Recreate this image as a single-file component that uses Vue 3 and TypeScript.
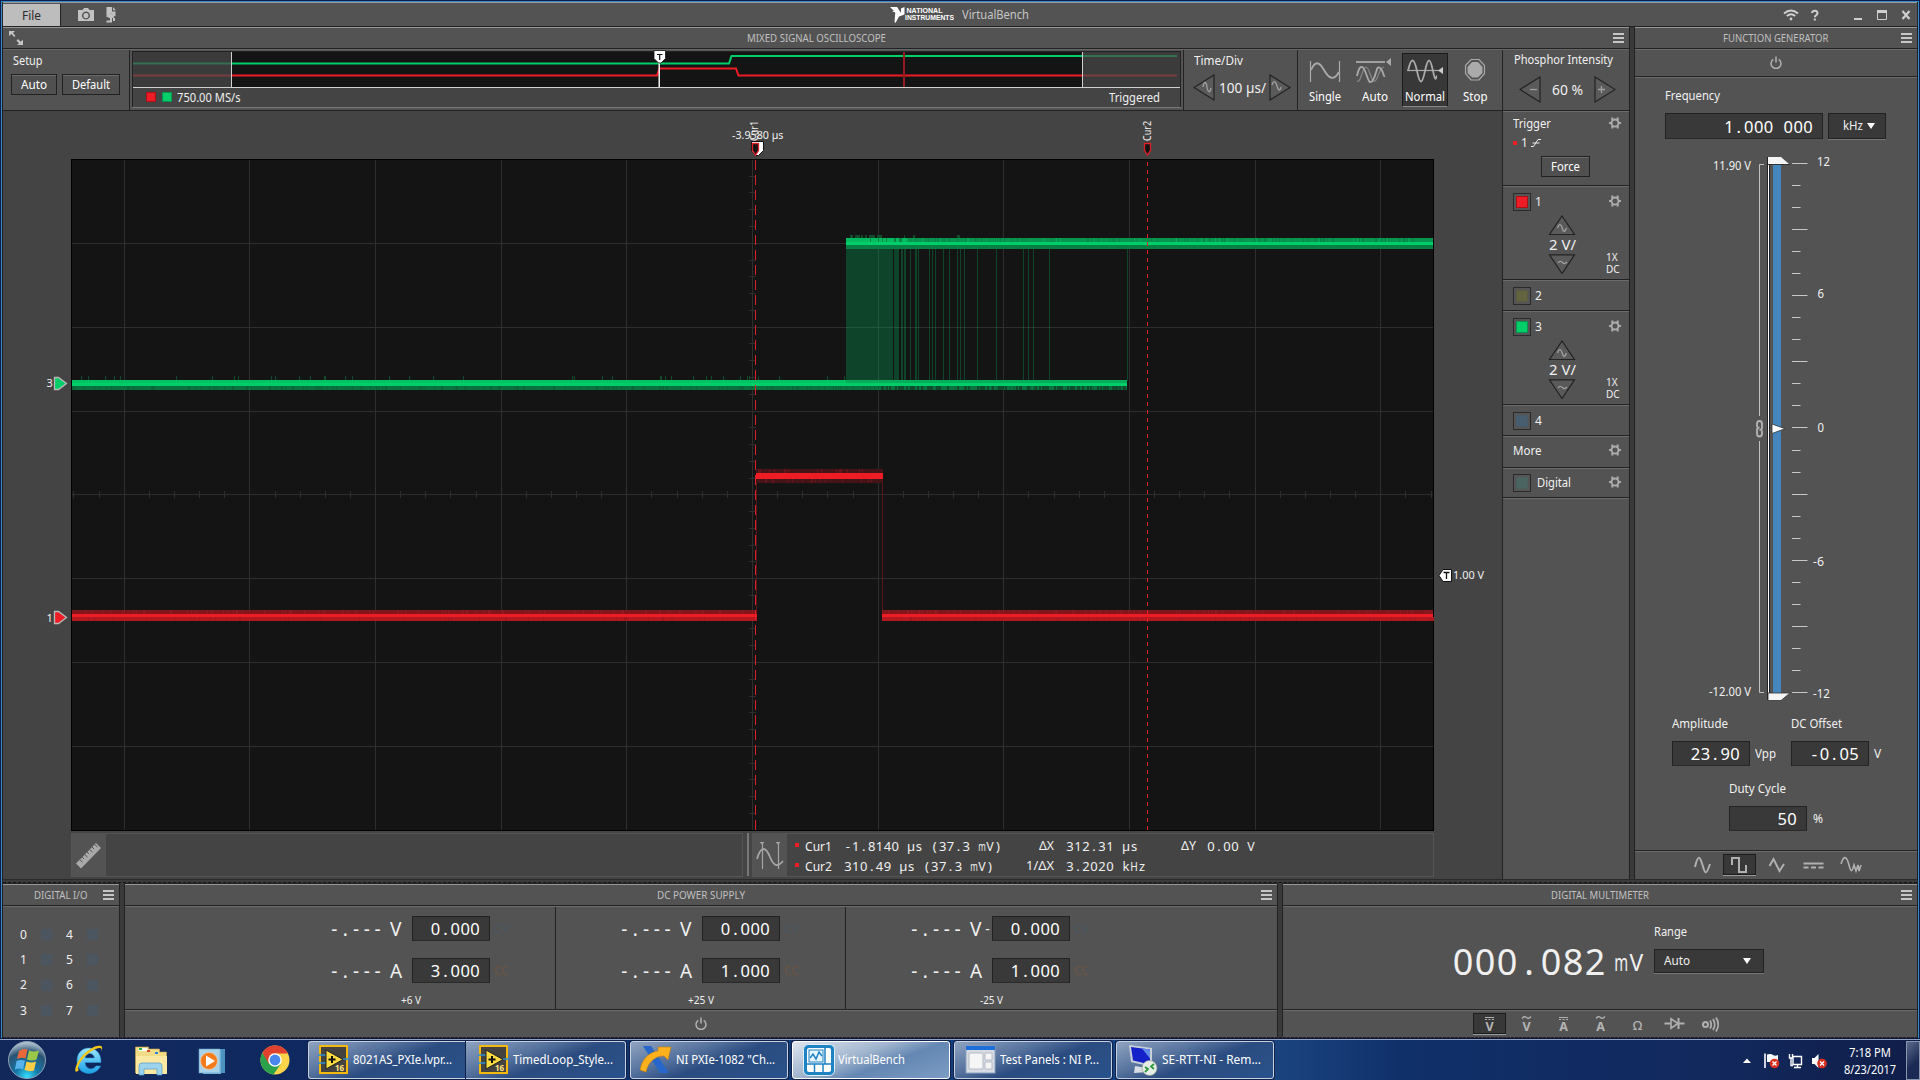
<script setup lang="ts">
import { h, type FunctionalComponent } from 'vue'

/* Squeezes or stretches a text run to a given width in pixels. */
const vFit = {
  mounted(el: HTMLElement, binding: { value: number }) {
    const natural = el.getBoundingClientRect().width
    if (!natural) return
    el.style.width = `${binding.value}px`
    el.style.transform = `scaleX(${binding.value / natural})`
  },
}

/* Fixed-pitch readout: every character sits in a cell of the same width. */
const narrow: Record<string, number> = { m: 0.62, H: 0.78, C: 0.95, V: 0.95 }
const Mono: FunctionalComponent<{ text: string; pitch: number }> = (p) =>
  h('span', { class: 'mono' }, [...p.text].map((c) =>
    h('span', {
      style: { width: `${p.pitch}px`, transform: narrow[c] ? `scaleX(${narrow[c]})` : undefined },
    }, c)))
Mono.props = ['text', 'pitch']

const gridX = [124, 249, 375, 501, 626, 752, 878, 1003, 1129, 1255, 1380]
const gridY = [243, 327, 411, 494, 578, 662, 746]
const minorX: number[] = []
for (let i = -27; i <= 27; i++) if (i % 5) minorX.push(Math.floor(752.5 + i * 25.13))
const minorY: number[] = []
for (let i = -19; i <= 19; i++) if (i % 5) minorY.push(Math.floor(494.8 + i * 16.77))

const jitter: [number, number][] = [
  [846, 47], [894, 5], [901, 2], [904, 2], [910, 1], [915, 2], [918, 1], [929, 1], [932, 1], [935, 1],
  [943, 1], [949, 1], [957, 1], [960, 1], [964, 1], [977, 1], [996, 1], [1023, 1], [1028, 1], [1033, 1],
  [1049, 1], [1127, 1],
]

let seed = 7
const rnd = () => (seed = (seed * 16807) % 2147483647) / 2147483647
const noise = (from: number, to: number, n: number) =>
  Array.from({ length: n }, () => Math.floor(from + rnd() * (to - from)))
const gLow = noise(72, 1126, 200)
const gLowTail = noise(880, 1126, 90)
const gHigh = noise(870, 1433, 130)
const gSpikes = noise(80, 850, 42)
const gTop = noise(850, 884, 18).concat([904, 913, 957])
const rLow = noise(72, 1433, 200).filter((x) => x < 756 || x > 883)
const rHigh = noise(758, 882, 34)

type Channel = { id: string; color: string; edge: string; on: boolean }
const channels: Channel[] = [
  { id: '1', color: '#ee1c24', edge: '#a61218', on: true },
  { id: '2', color: '#63633f', edge: '#595a44', on: false },
  { id: '3', color: '#00cf69', edge: '#079350', on: true },
  { id: '4', color: '#475d70', edge: '#4a5967', on: false },
]

const ticks = Array.from({ length: 25 }, (_, k) => ({ y: Math.round(163 + k * 22.04) + 0.5, long: k % 3 === 0 }))
const scaleLabels = [
  { t: '12', x: 1817, y: 165.5, w: 13 }, { t: '6', x: 1817.5, y: 297.5, w: 6.5 }, { t: '0', x: 1817.5, y: 431.5, w: 6.5 },
  { t: '-6', x: 1813, y: 565.5, w: 11 }, { t: '-12', x: 1813, y: 697.5, w: 17 },
]

const supplies = [
  { v: '0.000', a: '3.000', name: '+6 V', sign: '', w: 20 },
  { v: '0.000', a: '1.000', name: '+25 V', sign: '', w: 26 },
  { v: '0.000', a: '1.000', name: '-25 V', sign: '-', w: 23 },
]
const dio = [['0', '4'], ['1', '5'], ['2', '6'], ['3', '7']]
const tasks = [
  { icon: 'lv', t: '8021AS_PXIe.lvpr...', w: 99, cls: 'grp-a' },
  { icon: 'lv', t: 'TimedLoop_Style...', w: 100, cls: 'grp-b' },
  { icon: 'max', t: 'NI PXIe-1082 "Ch...', w: 99, cls: '' },
  { icon: 'vb', t: 'VirtualBench', w: 67, cls: 'active' },
  { icon: 'tp', t: 'Test Panels : NI P...', w: 99, cls: '' },
  { icon: 'rdp', t: 'SE-RTT-NI - Rem...', w: 99, cls: '' },
]
</script>

<template>
  <div class="screen">
    <div class="win">
      <header class="title">
        <div class="file"><span v-fit="19">File</span></div>
        <svg class="ticons" width="40" height="20" viewBox="76 4 40 20">
          <path fill="#c2c2c2" fill-rule="evenodd" d="M78 9h4.500l1.500-2h4l1.500 2h4.500v11h-16zM86 10.500a4 4 0 1 0 .01 0zM86 12a2.600 2.600 0 1 1-.01 0z" />
          <path fill="#c2c2c2" d="M106.500 6h5.500v4.500h3.500v4.500h-2l-2.500-3-3 4h-1.500z" />
          <path fill="#c2c2c2" d="M113 6l2.800 3.200H113z" />
          <path fill="none" stroke="#c2c2c2" stroke-width="2" d="M106.500 20.500h4.500v-6M108.300 16.500l2.700-3 2.700 3M114 17v3" />
        </svg>
        <div class="brand">
          <svg class="logo" width="66" height="20" viewBox="889 5 66 20">
            <path fill="#fff" d="M890 7h7l4 6V8.500l3.500-1.500v7.500l-5.500 2-3.500 6.500-1-1 .8-9.500-3-1 1.500-.7z" />
            <text x="906.500" y="13" textLength="36" lengthAdjust="spacingAndGlyphs" class="ni">NATIONAL</text>
            <text x="905" y="20" textLength="49" lengthAdjust="spacingAndGlyphs" class="ni">INSTRUMENTS</text>
          </svg>
          <span v-fit="67">VirtualBench</span>
        </div>
        <svg class="winbtns" width="134" height="20" viewBox="1783 4 134 20" fill="none" stroke="#cfcfcf">
          <path d="M1784 12.500q7-6 14 0M1786.800 15q4.200-3.600 8.400 0" stroke-width="2" />
          <circle cx="1791" cy="18" r="1.400" fill="#cfcfcf" stroke="none" />
          <path d="M1812 12c0-3 5.500-3 5.500.2 0 2-2.700 2-2.700 4M1814.800 17.500v2" stroke-width="2" />
          <path d="M1854 18h8" stroke-width="2" />
          <path d="M1877.500 9.500h9v9h-9z" /><path d="M1877 10.500h10" stroke-width="3" />
          <path d="M1902.500 10l7 8M1909.500 10l-7 8" stroke-width="2.200" />
        </svg>
      </header>

      <div class="upper">
        <section class="panel mso">
          <div class="phead">
            <svg width="16" height="16" viewBox="7 30 16 16" fill="#c4c4c4"><path d="M8 31h6l-2 2 2.500 3-1.500 1-2.500-3-2.500 2zM22 45h-6l2-1.800-2.500-2.500 1.500-1.700 2.500 2.500L22 40z" /></svg>
            <span v-fit="139">MIXED SIGNAL OSCILLOSCOPE</span>
            <i class="burger" />
          </div>
          <div class="toolbar">
            <div class="tb setup">
              <span v-fit="29.500" class="lbl">Setup</span>
              <div class="btns">
                <button style="width: 46px"><span v-fit="26">Auto</span></button>
                <button style="width: 58px"><span v-fit="38">Default</span></button>
              </div>
            </div>
            <div class="tb over">
              <svg width="1049" height="57" viewBox="132 51 1049 57">
                <rect x="132" y="51" width="1049" height="57" fill="#232323" />
                <rect x="133" y="52" width="1047" height="35" fill="#141414" />
                <rect x="133" y="88" width="1047" height="19" fill="#444" />
                <rect x="132" y="107" width="1049" height="1" fill="#777" />
                <path d="M133 63.500H729L731.500 56H1177" fill="none" stroke="#00cf69" stroke-width="2" />
                <path d="M133 75.500H657L659.500 68.500H736L738.500 75.500H1177" fill="none" stroke="#ee1c24" stroke-width="2" />
                <rect x="903" y="52" width="2" height="35" fill="#951b1f" />
                <rect x="133" y="52" width="98" height="35" fill="#4b4b4b" opacity=".72" />
                <rect x="1083" y="52" width="97" height="35" fill="#4b4b4b" opacity=".72" />
                <path d="M231.500 52V87M1082.500 52V87M133 87.500H1180M659.500 63V87" stroke="#d0d0d0" />
                <path d="M659 63V87" stroke="#fff" />
                <path d="M654 50.500h11.500v8l-4.500 4.500h-2.500l-4.500-4.500z" fill="#fff" stroke="#111" stroke-width=".8" />
                <path d="M657 54.500h5.500M659.700 54v6" stroke="#111" stroke-width="1.200" />
                <rect x="146.500" y="92.500" width="9" height="9" fill="#ee1c24" stroke="#a61218" />
                <rect x="162.500" y="92.500" width="9" height="9" fill="#00cf69" stroke="#079350" />
                <text x="177" y="102" class="s12" textLength="63.500" lengthAdjust="spacingAndGlyphs">750.00 MS/s</text>
                <text x="1109" y="102" class="s12" textLength="51" lengthAdjust="spacingAndGlyphs">Triggered</text>
              </svg>
            </div>
            <div class="tb tdiv">
              <span v-fit="49" class="lbl">Time/Div</span>
              <div class="step">
                <svg width="22" height="27" viewBox="0 0 22 27" class="tri"><path d="M21 1v25L1 13.500z" /><path class="g" d="M10 13c1-6 3-6 4 0s3 6 4 1" /></svg>
                <span v-fit="47" class="v14">100 µs/</span>
                <svg width="22" height="27" viewBox="0 0 22 27" class="tri"><path d="M1 1v25l20-12.500z" /><path class="g" d="M3 11c2-6 4-3 5 1s3 6 4 1" /></svg>
              </div>
            </div>
            <div class="tb modes">
              <div class="mode">
                <svg width="46" height="30" viewBox="0 0 46 30"><path class="ic" d="M8.500 7v21M37.500 7v21" /><path class="ic w2" d="M9 16C13 7 17 7 22 16s10 11 15 2" /></svg>
                <span v-fit="32">Single</span>
              </div>
              <div class="mode">
                <svg width="46" height="30" viewBox="0 0 46 30"><path class="ic w2" d="M4 8h29" /><path fill="#aaa" d="M39 4v8l-5-4z" /><path class="ic" opacity=".6" d="M5 27c4 3 5-14 9-14s5 17 9 14 4-14 9-14" /><path class="ic w2" d="M5 22c2-10 5-12 8-5s4 15 8 9 3-15 7-12 3 9 5 8" /></svg>
                <span v-fit="26">Auto</span>
              </div>
              <div class="mode on">
                <svg width="46" height="30" viewBox="0 0 46 30"><path class="ic" d="M5 16.500h32" /><path fill="#ccc" d="M41 13v7l-5-3.500z" /><path class="ic w2" d="M6 17c3-14 6-14 9 0s5 14 8 0 5-14 8 0 3 5 4 5" /></svg>
                <span v-fit="40">Normal</span>
              </div>
              <div class="mode">
                <svg width="46" height="30" viewBox="0 0 46 30"><path class="ic" d="M19 5.500h8l5.500 6v8l-5.500 6.500h-8l-5.500-6.500v-8z" /><path fill="#aaa" d="M20 8h6l4.500 5v6L26 23.500h-6L15.500 19v-6z" /></svg>
                <span v-fit="24.500">Stop</span>
              </div>
            </div>
            <div class="tb phos">
              <span v-fit="99" class="lbl">Phosphor Intensity</span>
              <div class="step">
                <svg width="22" height="27" viewBox="0 0 22 27" class="tri"><path d="M21 1v25L1 13.500z" /><path class="g" d="M11 13.500h7" /></svg>
                <span v-fit="31" class="v14">60 %</span>
                <svg width="22" height="27" viewBox="0 0 22 27" class="tri"><path d="M1 1v25l20-12.500z" /><path class="g" d="M4 13.500h7M7.500 10v7" /></svg>
              </div>
            </div>
          </div>

          <div class="body">
            <div class="scope">
              <svg class="chart" width="1499" height="722" viewBox="3 111 1499 722" shape-rendering="crispEdges">
                <rect x="71" y="159" width="1363" height="672" fill="#000" />
                <rect x="72" y="160" width="1361" height="670" fill="#141414" />
                <g fill="#2e2e2e">
                  <rect v-for="x in gridX" :key="'x' + x" :x="x" y="160" width="1" height="670" />
                  <rect v-for="y in gridY" :key="'y' + y" x="72" :y="y" width="1361" height="1" />
                  <rect v-for="x in minorX" :key="'a' + x" :x="x" y="491" width="1" height="7" />
                  <rect v-for="y in minorY" :key="'b' + y" x="749" :y="y" width="7" height="1" />
                </g>
                <g fill="#00cf69" opacity=".26">
                  <rect v-for="j in jitter" :key="j[0]" :x="j[0]" y="248" :width="j[1]" height="133" />
                </g>
                <g fill="#124a2b">
                  <rect v-for="(x, i) in gSpikes" :key="i" :x="x" y="376" width="1" height="4" />
                  <rect v-for="(x, i) in gTop" :key="'t' + i" :x="x" y="235" :width="1 + (i % 3)" height="4" />
                </g>
                <rect x="72" y="380" width="775" height="6" fill="#00c463" />
                <rect x="846" y="380" width="281" height="4" fill="#04ad5a" />
                <rect x="72" y="383" width="1055" height="3" fill="#00cf69" />
                <rect x="72" y="386" width="1055" height="4" fill="#0b713f" />
                <rect v-for="(x, i) in gLow" :key="'l' + i" :x="x" y="386" width="1" height="4" fill="#0c653a" />
                <rect v-for="(x, i) in gLowTail" :key="'m' + i" :x="x" y="386" width="2" height="4" fill="#124a2e" />
                <rect x="846" y="238" width="587" height="4" fill="#07954f" />
                <rect x="846" y="238" width="60" height="4" fill="#00bb60" />
                <rect x="846" y="242" width="587" height="3" fill="#00cf69" />
                <rect x="846" y="245" width="587" height="4" fill="#088045" />
                <rect v-for="(x, i) in gHigh" :key="'h' + i" :x="x" y="238" width="1" height="4" :fill="i % 4 ? '#098548' : '#04ad5a'" />

                <rect x="756" y="483" width="1" height="131" fill="#571619" />
                <rect x="882" y="483" width="1" height="131" fill="#571619" />
                <g v-for="s in [[72, 685], [882, 551]]" :key="s[0]">
                  <rect :x="s[0]" y="610" :width="s[1]" height="4" fill="#82161a" />
                  <rect :x="s[0]" y="614" :width="s[1]" height="3" fill="#ee1c24" />
                  <rect :x="s[0]" y="617" :width="s[1]" height="4" fill="#b5191f" />
                </g>
                <g v-for="(x, i) in rLow" :key="'r' + i">
                  <rect :x="x" y="610" width="1" height="4" fill="#901a1e" />
                  <rect v-if="i % 2" :x="x + 3" y="617" width="1" height="4" fill="#a4181c" />
                </g>
                <rect x="756" y="469" width="127" height="14" fill="#451416" />
                <rect v-for="(x, i) in rHigh" :key="'q' + i" :x="x" :y="i % 2 ? 469 : 479" width="1" height="4" fill="#63171a" />
                <rect x="756" y="473" width="127" height="6" fill="#ee1c24" />

                <path d="M755.500 160V830" stroke="#dc2027" stroke-dasharray="10 5" />
                <path d="M1147.500 162V830" stroke="#ee1c24" stroke-dasharray="4 4" />

                <g shape-rendering="auto">
                  <path d="M751.500 141.500h12v9l-5 5h-2.500l-4.500-4.500z" fill="#fff" stroke="#111" />
                  <path d="M752.500 143.500h6v7l-3 4.500-3-4.500z" fill="#141414" stroke="#dc2027" stroke-width="1.300" />
                  <path d="M1144.500 143.500h6v7l-3 4.500-3-4.500z" fill="#141414" stroke="#dc2027" stroke-width="1.300" />
                  <text x="732" y="139" class="s11" textLength="51.500" lengthAdjust="spacingAndGlyphs">-3.9580 µs</text>
                  <text transform="translate(757.500 141) rotate(-90)" class="s11" textLength="20" lengthAdjust="spacingAndGlyphs">Cur1</text>
                  <text transform="translate(1150.500 141) rotate(-90)" class="s11" textLength="20" lengthAdjust="spacingAndGlyphs">Cur2</text>
                  <text x="46.500" y="387" class="s11">3</text>
                  <text x="46.500" y="622" class="s11">1</text>
                  <path d="M54.500 377.500h4l8 6-8 6h-4z" fill="#00cf69" stroke="#b9b9b9" stroke-width="1.300" />
                  <path d="M54.500 611.500h4l8 6-8 6h-4z" fill="#ee1c24" stroke="#b9b9b9" stroke-width="1.300" />
                  <path d="M1451.500 569.500v12h-8.500l-4-6 4-6z" fill="#fff" stroke="#111" />
                  <path d="M1443.500 572.500h6M1446.500 572v7" stroke="#111" stroke-width="1.300" />
                  <text x="1453" y="579" class="s11" textLength="31" lengthAdjust="spacingAndGlyphs">1.00 V</text>
                </g>
              </svg>
              <div class="measure">
                <div class="mtile left">
                  <svg width="34" height="43" viewBox="0 0 34 43"><path fill="#a9a9a9" d="M24 9l5 5L9 34.500 4 29.500z" /><path stroke="#535353" d="M22.500 10.500l3 2.500M20 13l2 2M17.500 15.500l3 2.500M15 18l2 2M12.500 20.500l3 2.500M10 23l2 2M7.500 25.500l3 2.500" /></svg>
                </div>
                <i class="bar" />
                <div class="mtile right">
                  <svg width="34" height="43" viewBox="0 0 34 43" fill="none" stroke="#a5a5a5"><path d="M9.500 8v27M25.500 8v27" stroke-width="1.200" /><path d="M6.500 8h5l-2.500 2.500zM22.500 8h5l-2.500 2.500z" fill="#a5a5a5" stroke="none" /><path d="M4 25C8 11 13 13 17 23s8 10 13 4" stroke-width="1.800" /></svg>
                  <div class="readout">
                    <div class="rrow">
                      <i class="dot" /><span v-fit="27" class="cn">Cur1</span><Mono class="m1" text="-1.8140 µs (37.3 mV)" :pitch="7.9" />
                      <div class="dx"><span v-fit="15">ΔX</span></div><Mono class="m2" text="312.31 µs" :pitch="8" /><div class="dy"><span v-fit="15">ΔY</span></div><Mono text="0.00 V" :pitch="8" />
                    </div>
                    <div class="rrow">
                      <i class="dot" /><span v-fit="27" class="cn">Cur2</span><Mono class="m1" text="310.49 µs (37.3 mV)" :pitch="7.9" />
                      <div class="dx"><span v-fit="28">1/ΔX</span></div><Mono class="m2" text="3.2020 kHz" :pitch="8" />
                    </div>
                  </div>
                </div>
              </div>
            </div>

            <aside class="side">
              <div class="sec trig">
                <div class="row"><span v-fit="38">Trigger</span><svg class="gear" viewBox="0 0 12 12"><use href="#gear" /></svg></div>
                <div class="edge"><i class="dot" /><span>1</span><svg width="12" height="10" viewBox="0 0 12 10"><path d="M1 8.500h2.500L8 1.500h3M2.500 5h7" fill="none" stroke="#eee" /></svg></div>
                <button class="force"><span v-fit="29">Force</span></button>
              </div>
              <div v-for="c in channels" :key="c.id" class="sec" :class="c.on ? 'ch' : 'choff'">
                <div class="row">
                  <i class="sw"><b :style="{ background: c.color, borderColor: c.edge }" /></i><span class="cid">{{ c.id }}</span>
                  <svg v-if="c.on" class="gear" viewBox="0 0 12 12"><use href="#gear" /></svg>
                </div>
                <div v-if="c.on" class="vdiv">
                  <svg width="28" height="20" viewBox="0 0 28 20" class="tri"><path d="M14 1l12.500 18.500h-25z" /><path class="g" d="M9.500 13c2-6 4-3 5 1s3 2 4-1" /></svg>
                  <span v-fit="27" class="v14">2 V/</span>
                  <svg width="28" height="20" viewBox="0 0 28 20" class="tri"><path d="M14 19.500L1.500 .800h25z" /><path class="g" d="M10 9c2-3 4-1 5 0s2 1 4-1" /></svg>
                  <div class="coup">1X<br />DC</div>
                </div>
              </div>
              <div class="sec more"><div class="row"><span v-fit="28.500">More</span><svg class="gear" viewBox="0 0 12 12"><use href="#gear" /></svg></div></div>
              <div class="sec digi">
                <div class="row"><i class="sw"><b class="dsw" /></i><span v-fit="34" class="cid dg">Digital</span><svg class="gear" viewBox="0 0 12 12"><use href="#gear" /></svg></div>
              </div>
              <div class="sec rest" />
            </aside>
          </div>
        </section>

        <section class="panel fg">
          <div class="phead"><i /><span v-fit="105.500">FUNCTION GENERATOR</span><i class="burger" /></div>
          <div class="fgpow"><svg class="power" viewBox="0 0 12 13"><use href="#power" /></svg></div>
          <div class="fgbody">
            <div class="freq">
              <span v-fit="55">Frequency</span>
              <div class="frow">
                <div class="num fnum"><Mono text="1.000 000" :pitch="9.9" /></div>
                <div class="sel khz"><span v-fit="20">kHz</span><i class="dn" /></div>
              </div>
            </div>
            <svg width="282" height="560" viewBox="1635 150 282 560">
              <path d="M1764 164.500H1759.500V416M1759.500 441V692.500H1764" fill="none" stroke="#c0c0c0" />
              <path d="M1757 427v-3q0-3 2.500-3t2.500 3v3.500q0 2.500-2.500 2.500M1762 430.500v3q0 3-2.500 3t-2.500-3V430q0-2.500 2.500-2.500" fill="none" stroke="#b4b4b4" stroke-width="1.800" />
              <rect x="1767" y="157" width="3" height="543" fill="#222" /><rect x="1768" y="157" width="1" height="543" fill="#fff" />
              <rect x="1773" y="164" width="8" height="529" fill="#4486bd" />
              <path d="M1768 157h13l8.500 7.500H1768z" fill="#f4f4f4" /><path d="M1768 164.500h22" stroke="#333" />
              <path d="M1768 693h22l-9 7.500H1768z" fill="#f4f4f4" stroke="#333" stroke-width=".8" />
              <path d="M1772 424v9.500l13-4.800z" fill="#fff" stroke="#333" stroke-width=".8" />
              <path v-for="t in ticks" :key="t.y" :d="`M1792 ${t.y}H${t.long ? 1807.500 : 1800.500}`" stroke="#c8c8c8" />
              <text v-for="l in scaleLabels" :key="l.t" :x="l.x" :y="l.y" class="s12" :textLength="l.w" lengthAdjust="spacingAndGlyphs">{{ l.t }}</text>
              <text x="1713" y="170" class="s12" textLength="38" lengthAdjust="spacingAndGlyphs">11.90 V</text>
              <text x="1709" y="696" class="s12" textLength="42" lengthAdjust="spacingAndGlyphs">-12.00 V</text>
            </svg>
            <div class="amps">
              <div class="fld"><span v-fit="56">Amplitude</span><div class="frow"><div class="num"><Mono text="23.90" :pitch="9.9" /></div><span class="unit" v-fit="21">Vpp</span></div></div>
              <div class="fld"><span v-fit="51">DC Offset</span><div class="frow"><div class="num"><Mono text="-0.05" :pitch="9.9" /></div><span class="unit">V</span></div></div>
            </div>
            <div class="duty fld"><span v-fit="57">Duty Cycle</span><div class="frow"><div class="num"><Mono text="50" :pitch="9.9" /></div><span class="unit" v-fit="10">%</span></div></div>
          </div>
          <div class="tabs">
            <div class="tab"><svg viewBox="0 0 33 20"><path d="M9 12C12-1 14 1 16.500 10S20 21 24 9" /></svg></div>
            <div class="tab on"><svg viewBox="0 0 33 20"><path d="M9 10V3h7v14h7V10" /></svg></div>
            <div class="tab"><svg viewBox="0 0 33 20"><path d="M9.500 11l4-7 6 12L24 9" /></svg></div>
            <div class="tab"><svg viewBox="0 0 33 20"><path d="M6.500 8.500h20M6.500 12.500h5M14 12.500h5M21.500 12.500h5" /></svg></div>
            <div class="tab"><svg viewBox="0 0 33 20"><path d="M7 9C10-1 13 2 15 10s3 7 5 0l2 6 2-6 1 6 2-6" stroke-width="1.600" /></svg></div>
          </div>
        </section>
      </div>

      <div class="split" />

      <div class="lower">
        <section class="panel dio">
          <div class="phead"><i /><span v-fit="53.500">DIGITAL I/O</span><i class="burger" /></div>
          <div class="dbody">
            <div v-for="r in dio" :key="r[0]" class="drow"><span>{{ r[0] }}</span><i /><span>{{ r[1] }}</span><i /></div>
          </div>
        </section>
        <section class="panel dc">
          <div class="phead"><i /><span v-fit="88">DC POWER SUPPLY</span><i class="burger" /></div>
          <div class="dcb">
            <div v-for="s in supplies" :key="s.name" class="sup">
              <div class="blk">
                <div class="srow"><Mono class="dashes" text="-.---" :pitch="10.8" /><span class="un">V</span><span class="sg">{{ s.sign }}</span><div class="num"><Mono :text="s.v" :pitch="9.9" /></div><span class="cv">CV</span></div>
                <div class="srow"><Mono class="dashes" text="-.---" :pitch="10.8" /><span class="un">A</span><span class="sg" /><div class="num"><Mono :text="s.a" :pitch="9.9" /></div><span class="cv cc">CC</span></div>
                <div class="cap"><span v-fit="s.w">{{ s.name }}</span></div>
              </div>
            </div>
          </div>
          <div class="foot"><svg class="power" viewBox="0 0 12 13"><use href="#power" /></svg></div>
        </section>
        <section class="panel dmm">
          <div class="phead"><i /><span v-fit="98">DIGITAL MULTIMETER</span><i class="burger" /></div>
          <div class="dmb">
            <Mono class="big" text="000.082" :pitch="22" /><Mono class="mv" text="mV" :pitch="14.5" />
            <div class="rng"><span v-fit="33">Range</span><div class="sel"><span v-fit="26">Auto</span><i class="dn" /></div></div>
          </div>
          <div class="tabs">
            <div class="tab on"><svg viewBox="0 0 33 20"><path d="M12 3.500h9" stroke-width="1" /><path d="M12 5.500h2M15.500 5.500h2M19 5.500h2" stroke-width="1" /><text x="16.500" y="17">V</text></svg></div>
            <div class="tab"><svg viewBox="0 0 33 20"><path d="M12 4.500q2.500-3 4.500-1t4.500-1" stroke-width="1.300" /><text x="16.500" y="17">V</text></svg></div>
            <div class="tab"><svg viewBox="0 0 33 20"><path d="M12 3.500h9" stroke-width="1" /><path d="M12 5.500h2M15.500 5.500h2M19 5.500h2" stroke-width="1" /><text x="16.500" y="17">A</text></svg></div>
            <div class="tab"><svg viewBox="0 0 33 20"><path d="M12 4.500q2.500-3 4.500-1t4.500-1" stroke-width="1.300" /><text x="16.500" y="17">A</text></svg></div>
            <div class="tab"><svg viewBox="0 0 33 20"><text x="16.500" y="16" class="ohm">Ω</text></svg></div>
            <div class="tab"><svg viewBox="0 0 33 20"><path d="M6.500 9.500h6M20 9.500h6.500M20.500 4v11" /><path d="M13 4.800v9.400l7-4.700z" stroke-width="1.600" /></svg></div>
            <div class="tab"><svg viewBox="0 0 33 20"><circle cx="10.500" cy="10.500" r="2.500" /><path d="M15 6.500q2.500 4 0 8M18 5q3.500 5.500 0 11M21 3.500q4.500 7 0 14" stroke-width="1.800" /></svg></div>
          </div>
        </section>
      </div>
      <div class="dash" />
    </div>

    <footer class="taskbar">
      <svg width="308" height="40" viewBox="0 1040 308 40">
        <defs>
          <radialGradient id="orb" cx=".5" cy=".95" r=".9"><stop offset="0" stop-color="#35e0ff" /><stop offset=".35" stop-color="#1577a8" /><stop offset=".75" stop-color="#2a5373" /><stop offset="1" stop-color="#a9bccb" /></radialGradient>
          <linearGradient id="ieg" x1="0" y1="0" x2="0" y2="1"><stop offset="0" stop-color="#9be6ff" /><stop offset="1" stop-color="#1aa0e6" /></linearGradient>
        </defs>
        <circle cx="27" cy="1060" r="18.500" fill="url(#orb)" stroke="#8fa3b6" />
        <path d="M19 1051q4-3 8.500-1.500l-2 9q-4-1.500-8.500.5z" fill="#e8683a" /><path d="M29 1050.500q5 2 10 0l-2.500 9q-4 2-9.500 0z" fill="#9cc84a" />
        <path d="M16.500 1061q4-2 8.500-.3l-2 8.500q-4-1.500-8 .3z" fill="#57b4ea" /><path d="M26.500 1061.500q5 2 9.500 0l-2 9q-5 1.500-9.500-.5z" fill="#fbce45" />
        <path d="M101 1062.500H85c.5 7.500 8 8 11 3.500h4.500C96 1077 77 1076 77 1061c0-17.500 24.500-17.500 24 1.500zM85 1058h9.500c-1-6-8.500-6-9.500 0z" fill="url(#ieg)" fill-rule="evenodd" stroke="#2a9fe0" stroke-width=".5" />
        <path d="M79 1070c-5 5-5-2 0-10 6-9 17-16 22-14 2 1 1 4 0 6 1-3 .5-4-1-4-5 0-14 6-18 12-4 5-5 9-3 10z" fill="#f5c518" />
        <path d="M135.500 1047h13v2h11v3h7v21h-31z" fill="#f3dc86" stroke="#c9a64c" stroke-width=".6" />
        <path d="M136 1056h31v18h-31z" fill="#fbe9a3" /><path d="M138.500 1048h9v3h-9z" fill="#fff" /><path d="M139 1048h3v2h-3z" fill="#1fae3e" /><path d="M147 1050h3v2h-3z" fill="#d8452c" /><path d="M155 1052h3v2h-3z" fill="#2f86d8" />
        <path d="M139 1075v-9q0-3 3-3h17q3 0 3 3v9h-5v-6h-13v6z" fill="#9ed3ee" stroke="#4d9cc6" stroke-width=".7" />
        <path d="M207 1049h18v24h-18z" fill="#4b93c0" /><path d="M203 1050h18v24h-18z" fill="#7db8db" /><path d="M199 1049h21v24h-21z" fill="#a9d3ea" stroke="#5b9dc4" stroke-width=".6" />
        <circle cx="209" cy="1061" r="8.500" fill="#f27c1c" stroke="#fbd2a2" stroke-width=".6" /><path d="M206 1055.500v11l9-5.500z" fill="#fff" />
        <circle cx="275" cy="1060" r="14.500" fill="#fdd34a" /><path d="M262.400 1052.800A14.500 14.500 0 0 1 288 1053.500H275z" fill="#e0402f" />
        <path d="M262.400 1052.800A14.500 14.500 0 0 0 273.500 1074.500L281 1063.500l-10 1z" fill="#2ba14b" /><path d="M262.400 1052.800L269 1064l6-10.500z" fill="#e0402f" />
        <circle cx="275" cy="1060" r="6.800" fill="#fff" /><circle cx="275" cy="1060" r="5.400" fill="#4a86ec" />
      </svg>
      <div v-for="t in tasks" :key="t.t" class="task" :class="t.cls">
        <svg v-if="t.icon === 'lv'" width="32" height="30" viewBox="0 0 32 30"><rect x="2" y="1" width="27" height="27" fill="#45433f" stroke="#f5b80c" stroke-width="2" /><path d="M0 10h8M0 18h8M25 14h6" stroke="#2f8fd0" stroke-width="1.500" /><path d="M8 5v19l17-9.500z" fill="#fddb3f" stroke="#222" /><path d="M10.500 14.500h7M14 11v7" stroke="#111" stroke-width="2" /><text x="17" y="26" class="t16">16</text></svg>
        <svg v-else-if="t.icon === 'max'" class="mx" width="32" height="32" viewBox="0 0 32 32"><path d="M3 2h8l18 27h-9z" fill="#2667c9" /><path d="M0 26C2 14 10 8 18 7V3h13l-3 13-4-4C15 12 8 18 6 28z" fill="#fbb01e" stroke="#c27d0c" stroke-width=".6" /></svg>
        <svg v-else-if="t.icon === 'vb'" width="32" height="32" viewBox="0 0 32 32"><rect x=".5" y=".5" width="31" height="31" rx="5" fill="#1f82c3" stroke="#dff0fb" /><rect x="4" y="4" width="24" height="24" rx="2" fill="#fff" /><rect x="6" y="6" width="14" height="12" fill="#e9f5fc" stroke="#1f82c3" /><path d="M7 14l3-4 3 5 3-7 3 4" fill="none" stroke="#1f82c3" stroke-width="1.500" /><path d="M4 20h24M11.500 20v8M20 20v8M22 4v16" stroke="#1f82c3" stroke-width="1.500" /></svg>
        <svg v-else-if="t.icon === 'tp'" width="32" height="30" viewBox="0 0 32 30"><rect x="1" y="1" width="29" height="27" fill="#d6dbe4" stroke="#8ea2bf" /><path d="M1 1h29v4H1z" fill="#1d6fd8" /><path d="M4 8h14v16H4zM20 8h7v7h-7zM20 17h7v7h-7z" fill="#f5f5f5" stroke="#b5bac4" /></svg>
        <svg v-else width="32" height="32" viewBox="0 0 32 32"><path d="M2 1l23 3v19L4 18z" fill="#c9d0da" /><path d="M4 3l19 2.500v15L6 16.500z" fill="#1522c9" /><path d="M15 4.500l8 1v9z" fill="#5e8be8" /><path d="M8 22l12 2 1 4-14 1z" fill="#d9dee4" /><circle cx="22.500" cy="24" r="7.500" fill="#e8ece8" stroke="#8b9a8b" stroke-width=".6" /><path d="M18 23l3 2-3 3M27 20l-3 2.500 3 2.500" fill="none" stroke="#2c9a3b" stroke-width="1.800" /></svg>
        <span v-fit="t.w">{{ t.t }}</span>
      </div>
      <svg class="tray" width="92" height="24" viewBox="1740 1048 92 24">
        <path d="M1743 1063h8l-4-4.500z" fill="#fff" />
        <path d="M1765 1053.500v14.500" stroke="#fff" stroke-width="1.600" /><path d="M1767 1054.500q4-1 6 .5t5 0v7h-11z" fill="#fff" />
        <circle cx="1774.500" cy="1063.500" r="4.800" fill="#d8301f" /><path d="M1772.500 1061.500l4 4M1776.500 1061.500l-4 4" stroke="#fff" stroke-width="1.300" />
        <path d="M1793 1056.500h8.500v8h-8.500zM1794 1067.500h7M1797.500 1064.500v3M1789.500 1054v4h3v-4M1791 1058v7.500h2" fill="none" stroke="#fff" stroke-width="1.400" />
        <path d="M1812 1058h2.500l4-4v14l-4-4h-2.500z" fill="#fff" /><circle cx="1822" cy="1063.500" r="4.800" fill="#d8301f" /><path d="M1820 1061.500l4 4M1824 1061.500l-4 4" stroke="#fff" stroke-width="1.300" />
      </svg>
      <div class="clock"><span v-fit="42">7:18 PM</span><span v-fit="52">8/23/2017</span></div>
      <i class="peek" />
    </footer>

    <svg width="0" height="0" class="defs">
      <defs>
        <g id="gear"><circle cx="6" cy="6" r="3.500" fill="none" stroke="#acacac" stroke-width="1.900" /><path d="M3.300 .500v2.500M8.700 .500v2.500M3.300 9v2.500M8.700 9v2.500M0 6h2.500M9.500 6h2.500" stroke="#acacac" stroke-width="2" /></g>
        <g id="power"><path d="M3.300 3.300A5 5 0 1 0 8.700 3.300" fill="none" stroke="#b0b0b0" stroke-width="1.500" /><path d="M6 .500v6" stroke="#b0b0b0" stroke-width="1.500" /></g>
      </defs>
    </svg>
  </div>
</template>

<style>
body { background: #0c2350; }
.mono { display: inline-flex; white-space: pre; }
.mono > span { display: flex; flex: none; justify-content: center; }
</style>

<style scoped>
.screen { width: 1920px; height: 1080px; display: flex; flex-direction: column; overflow: hidden; background: #0b1f4c; font: 12px/16px "Noto Sans", sans-serif; color: #f0f0f0; }
.screen span { white-space: nowrap; transform-origin: 0 50%; flex: none; }
.defs { position: absolute; }
svg { display: block; flex: none; }
i { font-style: normal; }
.s12 { font: 12px "Noto Sans", sans-serif; fill: #f0f0f0; }
.s11 { font: 11px "Noto Sans", sans-serif; fill: #f0f0f0; }
.v14 { font-size: 14px; }
.lbl { align-self: flex-start; }

.win { height: 1036px; margin: 1px 1px 0; border: 1px solid #3a86c4; padding: 0 1px; background: #2a2a2a; display: flex; flex-direction: column; }
.title { height: 25px; box-sizing: border-box; border-top: 1px solid #9a9a9a; border-bottom: 1px solid #222; background: #535353; display: flex; align-items: center; }
.file { width: 58px; height: 22px; background: #bdbdbd; color: #2c2c2c; border-right: 1px solid #222; padding-left: 19px; box-sizing: border-box; display: flex; align-items: center; font-size: 13px; }
.ticons { margin-left: 15px; }
.brand { display: flex; align-items: center; gap: 7px; margin-left: 773px; color: #c6c6c6; }
.logo { overflow: visible; }
.ni { font: bold 7.500px "Liberation Sans", sans-serif; fill: #fff; }
.winbtns { margin-left: auto; }

.upper { height: 852px; display: flex; gap: 6px; background: #3a3a3a; }
.lower { height: 153px; display: flex; gap: 6px; background: #3a3a3a; }
.split { height: 5px; box-sizing: border-box; background: #3a3a3a; border-top: 1px solid #2a2a2a; display: flex; align-items: center; }
.split::before { content: ""; flex: 1; border-top: 1px dashed #181818; }
.dash { height: 1px; background: repeating-linear-gradient(90deg, #222 0 3px, #4a4a4a 3px 4px); }
.panel { background: #535353; display: flex; flex-direction: column; outline: 1px solid #222; outline-offset: 0; }
.phead { height: 22px; box-sizing: border-box; border-top: 1px solid #979797; border-bottom: 1px solid #222; display: grid; grid-template-columns: 1fr auto 1fr; align-items: center; padding: 0 5px; color: #c0c0c0; font-size: 11px; }
.burger { justify-self: end; width: 11px; height: 10px; margin-top: -1px; background: linear-gradient(#c6c6c6 2px, transparent 2px 4px, #c6c6c6 4px 6px, transparent 6px 8px, #c6c6c6 8px); }
.mso { width: 1626px; }
.fg { width: 282px; }

.toolbar { height: 62px; box-sizing: border-box; border-top: 1px solid #666; border-bottom: 1px solid #222; display: flex; }
.tb { box-sizing: border-box; border-right: 1px solid #222; display: flex; flex-direction: column; }
.setup { width: 127px; padding: 3px 0 0 8px; }
.setup .lbl { margin-left: 2px; }
.btns { display: flex; gap: 5px; margin-top: 5px; }
button { font: inherit; color: #fff; background: #505050; border: 1px solid #222; box-shadow: inset 0 1px #6b6b6b; padding: 0; height: 21px; box-sizing: border-box; display: flex; align-items: center; justify-content: center; }
.over { width: 1054px; padding: 1px 0 0 2px; }
.over svg { overflow: visible; }
.tdiv { width: 114px; padding: 3px 0 0 9px; }
.tdiv .lbl { margin-left: 1px; }
.step { display: flex; align-items: center; margin-top: 5px; }
.tdiv .step { gap: 3.500px; }
.tri { fill: #5a5a5a; stroke: #222; stroke-width: 1.200; }
.tri .g { fill: none; stroke: #a0a0a0; stroke-width: 1.300; }
.modes { width: 205px; flex-direction: row; padding: 3px 0 0 4px; gap: 4px; }
.mode { width: 46px; height: 54px; box-sizing: border-box; display: flex; flex-direction: column; align-items: center; color: #fff; padding-top: 6px; border: 1px solid transparent; }
.mode svg { margin-top: -6px; }
.mode span { margin-top: 5px; }
.mode.on { background: #383838; border-color: #1c1c1c; border-bottom-color: #888; }
.ic { fill: none; stroke: #aaa; stroke-width: 1.200; }
.w2 { stroke-width: 1.800; }
.phos { flex: 1; border-right: 0; padding: 2px 0 0 11px; }
.phos .step { margin: 8px 0 0 5px; }
.phos .v14 { margin: 0 11px; }

.body { flex: 1; display: flex; background: #444; }
.scope { width: 1499px; display: flex; flex-direction: column; }
.measure { margin-left: 68px; height: 44px; display: flex; align-items: flex-start; }
.mtile { height: 44px; box-sizing: border-box; border: 1px solid #555; display: flex; }
.mtile > svg { background: #535353; margin: -.5px; }
.left { width: 672px; }
.bar { width: 2px; height: 43px; background: #777; margin: 0 3px 0 4px; }
.right { width: 682px; }
.readout { padding: 2px 0 0 9px; }
.rrow { display: flex; align-items: center; height: 20px; font-size: 13px; }
.dot { width: 4px; height: 4px; background: #ee1c24; flex: none; }
.rrow .dot { margin: -3px 6px 0 0; }
.cn { margin-right: 12px; margin-top: 1px; font-size: 12px; }
.m1 { width: 160px; }
.dx { width: 50px; display: flex; justify-content: flex-end; font-size: 12.500px; }
.m2 { width: 103px; margin-left: 12px; }
.dy { width: 27px; display: flex; justify-content: flex-end; margin-right: 11px; font-size: 12.500px; }

.side { flex: 1; border-left: 1px solid #222; background: #535353; display: flex; flex-direction: column; }
.sec { box-sizing: border-box; border-top: 1px solid #6c6c6c; border-bottom: 1px solid #222; padding-left: 10px; }
.row { display: flex; align-items: center; height: 18px; }
.gear { width: 12px; height: 12px; margin: 0 8px 0 auto; }
.trig { height: 75px; padding-top: 3px; }
.edge { display: flex; align-items: center; gap: 3px; height: 20px; }
.edge span { margin-left: 1px; }
.edge svg { margin-left: -1px; }
.force { width: 49px; margin: 3px 0 0 28px; }
.ch { height: 94px; padding-top: 6px; }
.ch + .choff { height: 31px; }
.ch, .ch + .choff { flex: none; }
.choff { padding-top: 6px; }
.sw { width: 18px; height: 18px; box-sizing: border-box; border: 1px solid #2a2a2a; background: #555; padding: 2px; flex: none; }
.sw b { display: block; width: 12px; height: 12px; box-sizing: border-box; border: 1px solid; }
.sw .dsw { background: #4a6562; border-color: #4c5f5d; }
.cid { margin-left: 4px; }
.dg { margin-left: 6px; }
.row .gear { margin-top: -2px; }
.vdiv { position: relative; display: flex; flex-direction: column; align-items: center; width: 98px; margin-top: 4px; }
.vdiv .v14 { line-height: 19px; }
.coup { position: absolute; left: 93px; top: 36px; width: 14px; font-size: 10px; line-height: 12px; }
.more { height: 32px; padding-top: 5px; }
.digi { height: 30px; padding-top: 5px; }
.rest { flex: 1; border-bottom: 0; }

.fgpow { height: 28px; box-sizing: border-box; border-top: 1px solid #6c6c6c; border-bottom: 1px solid #222; display: flex; align-items: center; justify-content: center; }
.power { width: 12px; height: 13px; margin-bottom: 1px; }
.fgbody { height: 774px; box-sizing: border-box; border-top: 1px solid #6c6c6c; }
.freq { padding: 10px 0 0 30px; height: 72px; box-sizing: border-box; }
.freq > span, .fld > span { display: inline-block; }
.frow { display: flex; align-items: center; }
.freq .frow { margin-top: 9px; gap: 5px; }
.num { flex: none; width: 78px; height: 25px; box-sizing: border-box; background: #393939; border: 1px solid #222; border-bottom-color: #2a2a2a; display: flex; align-items: center; justify-content: flex-end; padding: 1px 9px 0 0; font-size: 16.500px; color: #fff; }
.fnum { width: 158px; height: 26px; }
.sel { height: 26px; box-sizing: border-box; background: #393939; border: 1px solid #222; box-shadow: 0 1px #777; display: flex; align-items: center; }
.khz { width: 58px; padding-left: 14px; gap: 4px; }
.dn { border: 4px solid transparent; border-top: 6px solid #fff; border-bottom: 0; }
.amps { display: flex; gap: 41px; padding-left: 37px; margin-top: 5px; }
.fld .frow { margin-top: 8px; gap: 5px; }
.fld > span { line-height: 18px; height: 18px; }
.amps .fld { width: 78px; }
.duty { margin: 14px 0 0 94px; }
.duty .frow { gap: 6px; }
.tabs { height: 27px; box-sizing: border-box; border-top: 1px solid #6c6c6c; box-shadow: 0 -1px #222; display: flex; justify-content: center; gap: 4px; padding-top: 2px; }
.tab { width: 33px; height: 21px; box-sizing: border-box; border: 1px solid transparent; }
.tab.on { background: #383838; border-color: #1c1c1c; box-shadow: 0 1px #999; }
.tab svg { width: 33px; height: 20px; margin-left: -1px; fill: none; stroke: #b0b0b0; stroke-width: 2; }
.tab text { font: bold 12.500px "Noto Sans", sans-serif; fill: #b4b4b4; stroke: none; text-anchor: middle; }
.tab .ohm { font-size: 13px; font-weight: 500; }

.dio { width: 116px; }
.dc { width: 1152px; }
.dmm { width: 634px; }
.dbody { border-top: 1px solid #6c6c6c; flex: 1; padding: 15px 0 0 17px; }
.drow { display: flex; align-items: center; height: 25.300px; }
.drow span { width: 7px; }
.drow i { width: 11px; height: 11px; background: #4b5660; margin: 0 14px 0 14px; }
.dcb { height: 103px; display: flex; border-top: 1px solid #6c6c6c; }
.sup { box-sizing: border-box; width: 290px; border-right: 1px solid #222; padding: 9px 0 0 66px; }
.sup:first-child { width: 431px; padding-left: 207px; }
.sup:last-child { flex: 1; border-right: 0; }
.blk { width: 158px; }
.srow { display: flex; align-items: center; height: 25px; margin-bottom: 17px; font-size: 19px; }
.dashes { margin-left: -3px; }
.un { width: 12px; margin-left: 7px; font-size: 19px; }
.sg { width: 9px; font-size: 14px; text-align: center; flex: none; margin-left: 1px; }
.cv { font-size: 12px; color: #4a5762; margin-left: 4px; width: 20px; }
.cc { color: #6b5442; }
.cap { display: flex; justify-content: center; font-size: 11px; margin-top: -8px; }
.foot { flex: 1; border-top: 1px solid #6c6c6c; box-shadow: 0 -1px #222; display: flex; align-items: center; justify-content: center; }
.dmb { height: 103px; border-top: 1px solid #6c6c6c; display: flex; align-items: center; padding-left: 169px; box-sizing: content-box; }
.big { font-size: 36px; line-height: 44px; margin-top: 6px; }
.mv { font-size: 24px; margin: 7px 0 0 8px; }
.rng { align-self: flex-start; margin: 17px 0 0 11px; display: flex; flex-direction: column; align-items: flex-start; gap: 9px; }
.rng .sel { width: 110px; height: 24px; padding: 0 12px 0 9px; justify-content: space-between; }

.taskbar { height: 41px; box-sizing: border-box; border-top: 1px solid #8ea3c4; display: flex; align-items: center; background: linear-gradient(90deg, #12275a, #0e2a62 20%, #14417f 55%, #1b4580 66%, #10306a 73%, #12285c 90%, #101d48); box-shadow: 0 -1px #0b1638; }
.task { width: 158px; height: 38px; box-sizing: border-box; border: 1px solid #c5d0e0; border-radius: 3px; margin-right: 4px; padding-left: 10px; display: flex; align-items: center; gap: 2px; color: #fff; background: linear-gradient(160deg, #8fa3c0 0, #54719d 35%, #2b4c80 55%, #29528b); box-shadow: 0 0 0 1px #10214a; flex: none; }
.task span { margin-left: 1px; }
.mx { margin: 0 1px 0 -1px; }
.grp-a { margin-right: 0; border-right-color: #6d82a6; border-radius: 3px 0 0 3px; padding-left: 9px; }
.grp-b { width: 160px; border-left: 0; border-radius: 0 3px 3px 0; padding-left: 12px; }
.active { background: linear-gradient(160deg, #dfe6ee, #9fb4cd 40%, #6487b3 60%, #7b9dc4); border-color: #fff; }
.t16 { font: bold 8px "Noto Sans", sans-serif; fill: #ffe680; }
.tray { margin-left: auto; }
.clock { width: 60px; display: flex; flex-direction: column; align-items: center; line-height: 17px; margin: 1px 0 0 8px; color: #fff; }
.peek { width: 14px; height: 39px; box-sizing: border-box; margin-left: 6px; border: 1px solid #8895ad; background: linear-gradient(135deg, #5a6a8c, #1b2a54 60%); }
</style>
